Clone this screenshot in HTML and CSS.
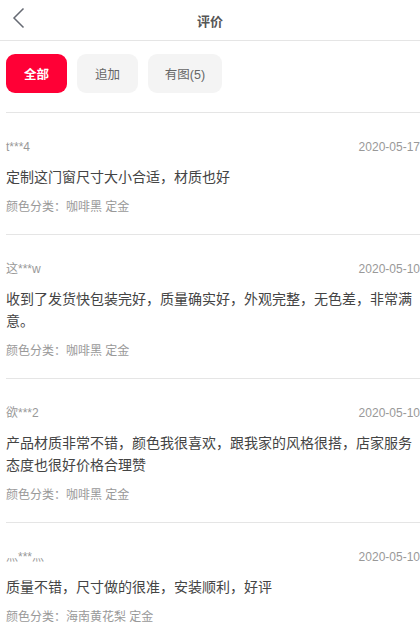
FILE: index.html
```html
<!DOCTYPE html>
<html lang="zh">
<head>
<meta charset="utf-8">
<title>评价</title>
<link rel="stylesheet" href="styles.css">
</head>
<body>
<header class="topbar">
  <svg class="back" width="14" height="22" viewBox="0 0 14 22"><polyline points="11.5,1.5 2,11 11.5,20.5" fill="none" stroke="#666a73" stroke-width="1.5"/></svg>
  <h1 class="title">评价</h1>
</header>
<nav class="tabs">
  <span class="tab active">全部</span>
  <span class="tab">追加</span>
  <span class="tab wide">有图(5)</span>
</nav>
<main class="list">
  <section class="item">
    <div class="meta"><span class="name">t***4</span><span class="date">2020-05-17</span></div>
    <p class="text">定制这门窗尺寸大小合适，材质也好</p>
    <p class="spec">颜色分类：咖啡黑 定金</p>
  </section>
  <section class="item">
    <div class="meta"><span class="name">这***w</span><span class="date">2020-05-10</span></div>
    <p class="text">收到了发货快包装完好，质量确实好，外观完整，无色差，非常满意。</p>
    <p class="spec">颜色分类：咖啡黑 定金</p>
  </section>
  <section class="item">
    <div class="meta"><span class="name">欲***2</span><span class="date">2020-05-10</span></div>
    <p class="text">产品材质非常不错，颜色我很喜欢，跟我家的风格很搭，店家服务态度也很好价格合理赞</p>
    <p class="spec">颜色分类：咖啡黑 定金</p>
  </section>
  <section class="item">
    <div class="meta"><span class="name">灬***灬</span><span class="date">2020-05-10</span></div>
    <p class="text">质量不错，尺寸做的很准，安装顺利，好评</p>
    <p class="spec">颜色分类：海南黄花梨 定金</p>
  </section>
</main>
</body>
</html>
```
FILE: styles.css
```css
* { box-sizing: border-box; }
html, body { margin: 0; padding: 0; background: #fff; }
body {
  font-family: "Liberation Sans", "Noto Sans CJK SC", sans-serif;
  color: #333;
  width: 420px;
  overflow: hidden;
}
.topbar {
  position: relative;
  height: 41px;
  border-bottom: 1px solid #e5e5e5;
  display: flex;
  align-items: center;
  justify-content: center;
}
.back {
  position: absolute;
  left: 12px;
  top: 7px;
}
.title {
  margin: 0;
  font-size: 13px;
  font-weight: bold;
  color: #555;
}
.tabs {
  display: flex;
  gap: 10px;
  padding: 13px 0 19px 0;
  border-bottom: 1px solid #e5e5e5;
  margin-left: 6px;
}
.tab {
  width: 61px;
  height: 39px;
  border-radius: 9px;
  background: #f4f4f4;
  color: #666;
  font-size: 12.5px;
  display: flex;
  align-items: center;
  justify-content: center;
}
.tab.wide { width: 74px; }
.tab.active {
  background: #ff0036;
  color: #fff;
  font-weight: bold;
}
.list { margin-left: 6px; }
.item {
  padding: 24px 0 18px 0;
  border-bottom: 1px solid #e5e5e5;
}
.meta {
  display: flex;
  justify-content: space-between;
  font-size: 12px;
  line-height: 20px;
  color: #999;
}
.text {
  margin: 9px 0 0;
  font-size: 14px;
  line-height: 22px;
  color: #444;
}
.spec {
  margin: 10px 0 0;
  font-size: 12px;
  line-height: 18px;
  color: #999;
}
```
